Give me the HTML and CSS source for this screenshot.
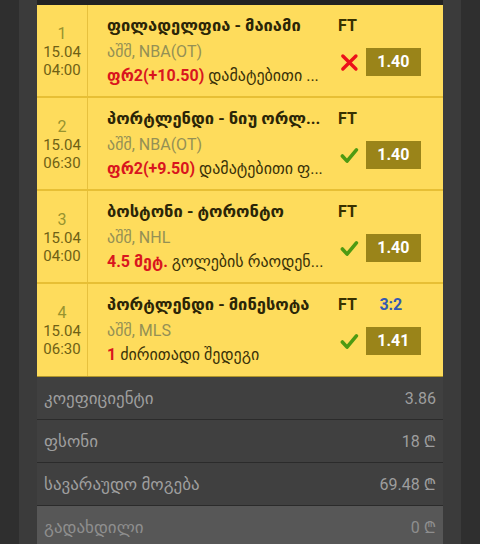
FILE: index.html
```html
<!DOCTYPE html>
<html lang="ka">
<head>
    <meta charset="UTF-8">
    <meta name="viewport" content="width=device-width, initial-scale=1.0">
    <title>ბილეთი</title>
    <link rel="stylesheet" href="styles.css">
</head>
<body>
    <div class="panel">
        <div class="topbar"></div>

        <div class="bets">
            <div class="bet">
                <div class="when">
                    <span class="num">1</span>
                    <span>15.04</span>
                    <span>04:00</span>
                </div>
                <div class="info">
                    <div class="title">ფილადელფია - მაიამი</div>
                    <div class="status">FT</div>
                    <div class="league">აშშ, NBA(OT)</div>
                    <div class="pick"><b>ფრ2(+10.50)</b> დამატებითი ...</div>
                    <div class="result">
                        <svg class="icon" viewBox="0 0 20 20"><path d="M3 3 L17 17 M17 3 L3 17" stroke="#ec111a" stroke-width="3.6" stroke-linecap="round"/></svg>
                        <span class="odds">1.40</span>
                    </div>
                </div>
            </div>

            <div class="bet">
                <div class="when">
                    <span class="num">2</span>
                    <span>15.04</span>
                    <span>06:30</span>
                </div>
                <div class="info">
                    <div class="title">პორტლენდი - ნიუ ორლ...</div>
                    <div class="status">FT</div>
                    <div class="league">აშშ, NBA(OT)</div>
                    <div class="pick"><b>ფრ2(+9.50)</b> დამატებითი ფ...</div>
                    <div class="result">
                        <svg class="icon" viewBox="0 0 20 20"><path d="M2.5 10.5 L7.5 16 L17.5 4" fill="none" stroke="#4e9a12" stroke-width="3.8" stroke-linecap="round" stroke-linejoin="round"/></svg>
                        <span class="odds">1.40</span>
                    </div>
                </div>
            </div>

            <div class="bet">
                <div class="when">
                    <span class="num">3</span>
                    <span>15.04</span>
                    <span>04:00</span>
                </div>
                <div class="info">
                    <div class="title">ბოსტონი - ტორონტო</div>
                    <div class="status">FT</div>
                    <div class="league">აშშ, NHL</div>
                    <div class="pick"><b>4.5 მეტ.</b> გოლების რაოდენ...</div>
                    <div class="result">
                        <svg class="icon" viewBox="0 0 20 20"><path d="M2.5 10.5 L7.5 16 L17.5 4" fill="none" stroke="#4e9a12" stroke-width="3.8" stroke-linecap="round" stroke-linejoin="round"/></svg>
                        <span class="odds">1.40</span>
                    </div>
                </div>
            </div>

            <div class="bet">
                <div class="when">
                    <span class="num">4</span>
                    <span>15.04</span>
                    <span>06:30</span>
                </div>
                <div class="info">
                    <div class="title">პორტლენდი - მინესოტა</div>
                    <div class="status">FT <span class="score">3:2</span></div>
                    <div class="league">აშშ, MLS</div>
                    <div class="pick"><b>1</b> ძირითადი შედეგი</div>
                    <div class="result">
                        <svg class="icon" viewBox="0 0 20 20"><path d="M2.5 10.5 L7.5 16 L17.5 4" fill="none" stroke="#4e9a12" stroke-width="3.8" stroke-linecap="round" stroke-linejoin="round"/></svg>
                        <span class="odds">1.41</span>
                    </div>
                </div>
            </div>
        </div>

        <div class="summary">
            <div class="row"><span class="label">კოეფიციენტი</span><span>3.86</span></div>
            <div class="row"><span class="label">ფსონი</span><span>18 ₾</span></div>
            <div class="row"><span class="label">სავარაუდო მოგება</span><span>69.48 ₾</span></div>
            <div class="row paid"><span class="label">გადახდილი</span><span>0 ₾</span></div>
        </div>
    </div>
</body>
</html>
```

FILE: styles.css
```css
body {
    margin: 0;
    padding: 0 19px;
    background-color: #2f2f2f;
    font-family: Roboto, "DejaVu Sans", "Noto Sans", sans-serif;
    height: 544px;
    overflow: hidden;
}

.panel {
    background-color: #3b3b3b;
    padding: 0 18px;
    min-height: 544px;
}

.topbar {
    height: 5px;
    background-color: #222;
}

.bets {
    background-color: #fedc5c;
    border-bottom: 1px solid #b0952a;
}

.bet {
    display: grid;
    grid-template-columns: 51px 1fr;
    height: 91px;
    border-bottom: 2px solid #e7bf35;
}

.bet:last-child {
    border-bottom: none;
    height: 92px;
}

.when {
    display: flex;
    flex-direction: column;
    align-items: center;
    justify-content: center;
    border-right: 1px solid #e7c13e;
    font-size: 15px;
    line-height: 18px;
    color: #6f6115;
    padding-top: 2px;
}

.when .num {
    color: #98932f;
    font-size: 16px;
}

.info {
    display: grid;
    grid-template-columns: 1fr 83px;
    grid-template-rows: 26px 25px 23px;
    padding: 8px 22px 0 19px;
    column-gap: 8px;
}

.title {
    font-size: 16.5px;
    font-weight: bold;
    color: #2b2507;
    white-space: nowrap;
    overflow: hidden;
    line-height: 26px;
}

.status {
    font-size: 16px;
    font-weight: bold;
    color: #383100;
    line-height: 26px;
}

.score {
    color: #3459b2;
    margin-left: 19px;
}

.league {
    grid-column: 1;
    font-size: 16px;
    color: #949055;
    line-height: 25px;
}

.pick {
    grid-column: 1;
    font-size: 16px;
    color: #3a3208;
    line-height: 23px;
    white-space: nowrap;
    overflow: hidden;
}

.pick b {
    color: #d9161e;
}

.result {
    grid-column: 2;
    grid-row: 2 / 4;
    display: flex;
    align-items: center;
    gap: 7px;
    margin-left: 2px;
    padding-bottom: 2px;
}

.icon {
    width: 19px;
    height: 19px;
}

.odds {
    width: 56px;
    height: 28px;
    line-height: 28px;
    text-align: center;
    background-color: #9a8419;
    color: #fff;
    font-weight: bold;
    font-size: 16px;
}

.summary .row {
    display: flex;
    justify-content: space-between;
    align-items: center;
    height: 42px;
    padding: 0 7px;
    background-color: #404040;
    border-bottom: 1px solid #2b2b2b;
    color: #9e9e9e;
    font-size: 16px;
}

.summary .label {
    font-size: 17px;
}

.summary .row.paid {
    background-color: #575757;
    color: #8e8e8e;
    border-bottom: none;
}
```
